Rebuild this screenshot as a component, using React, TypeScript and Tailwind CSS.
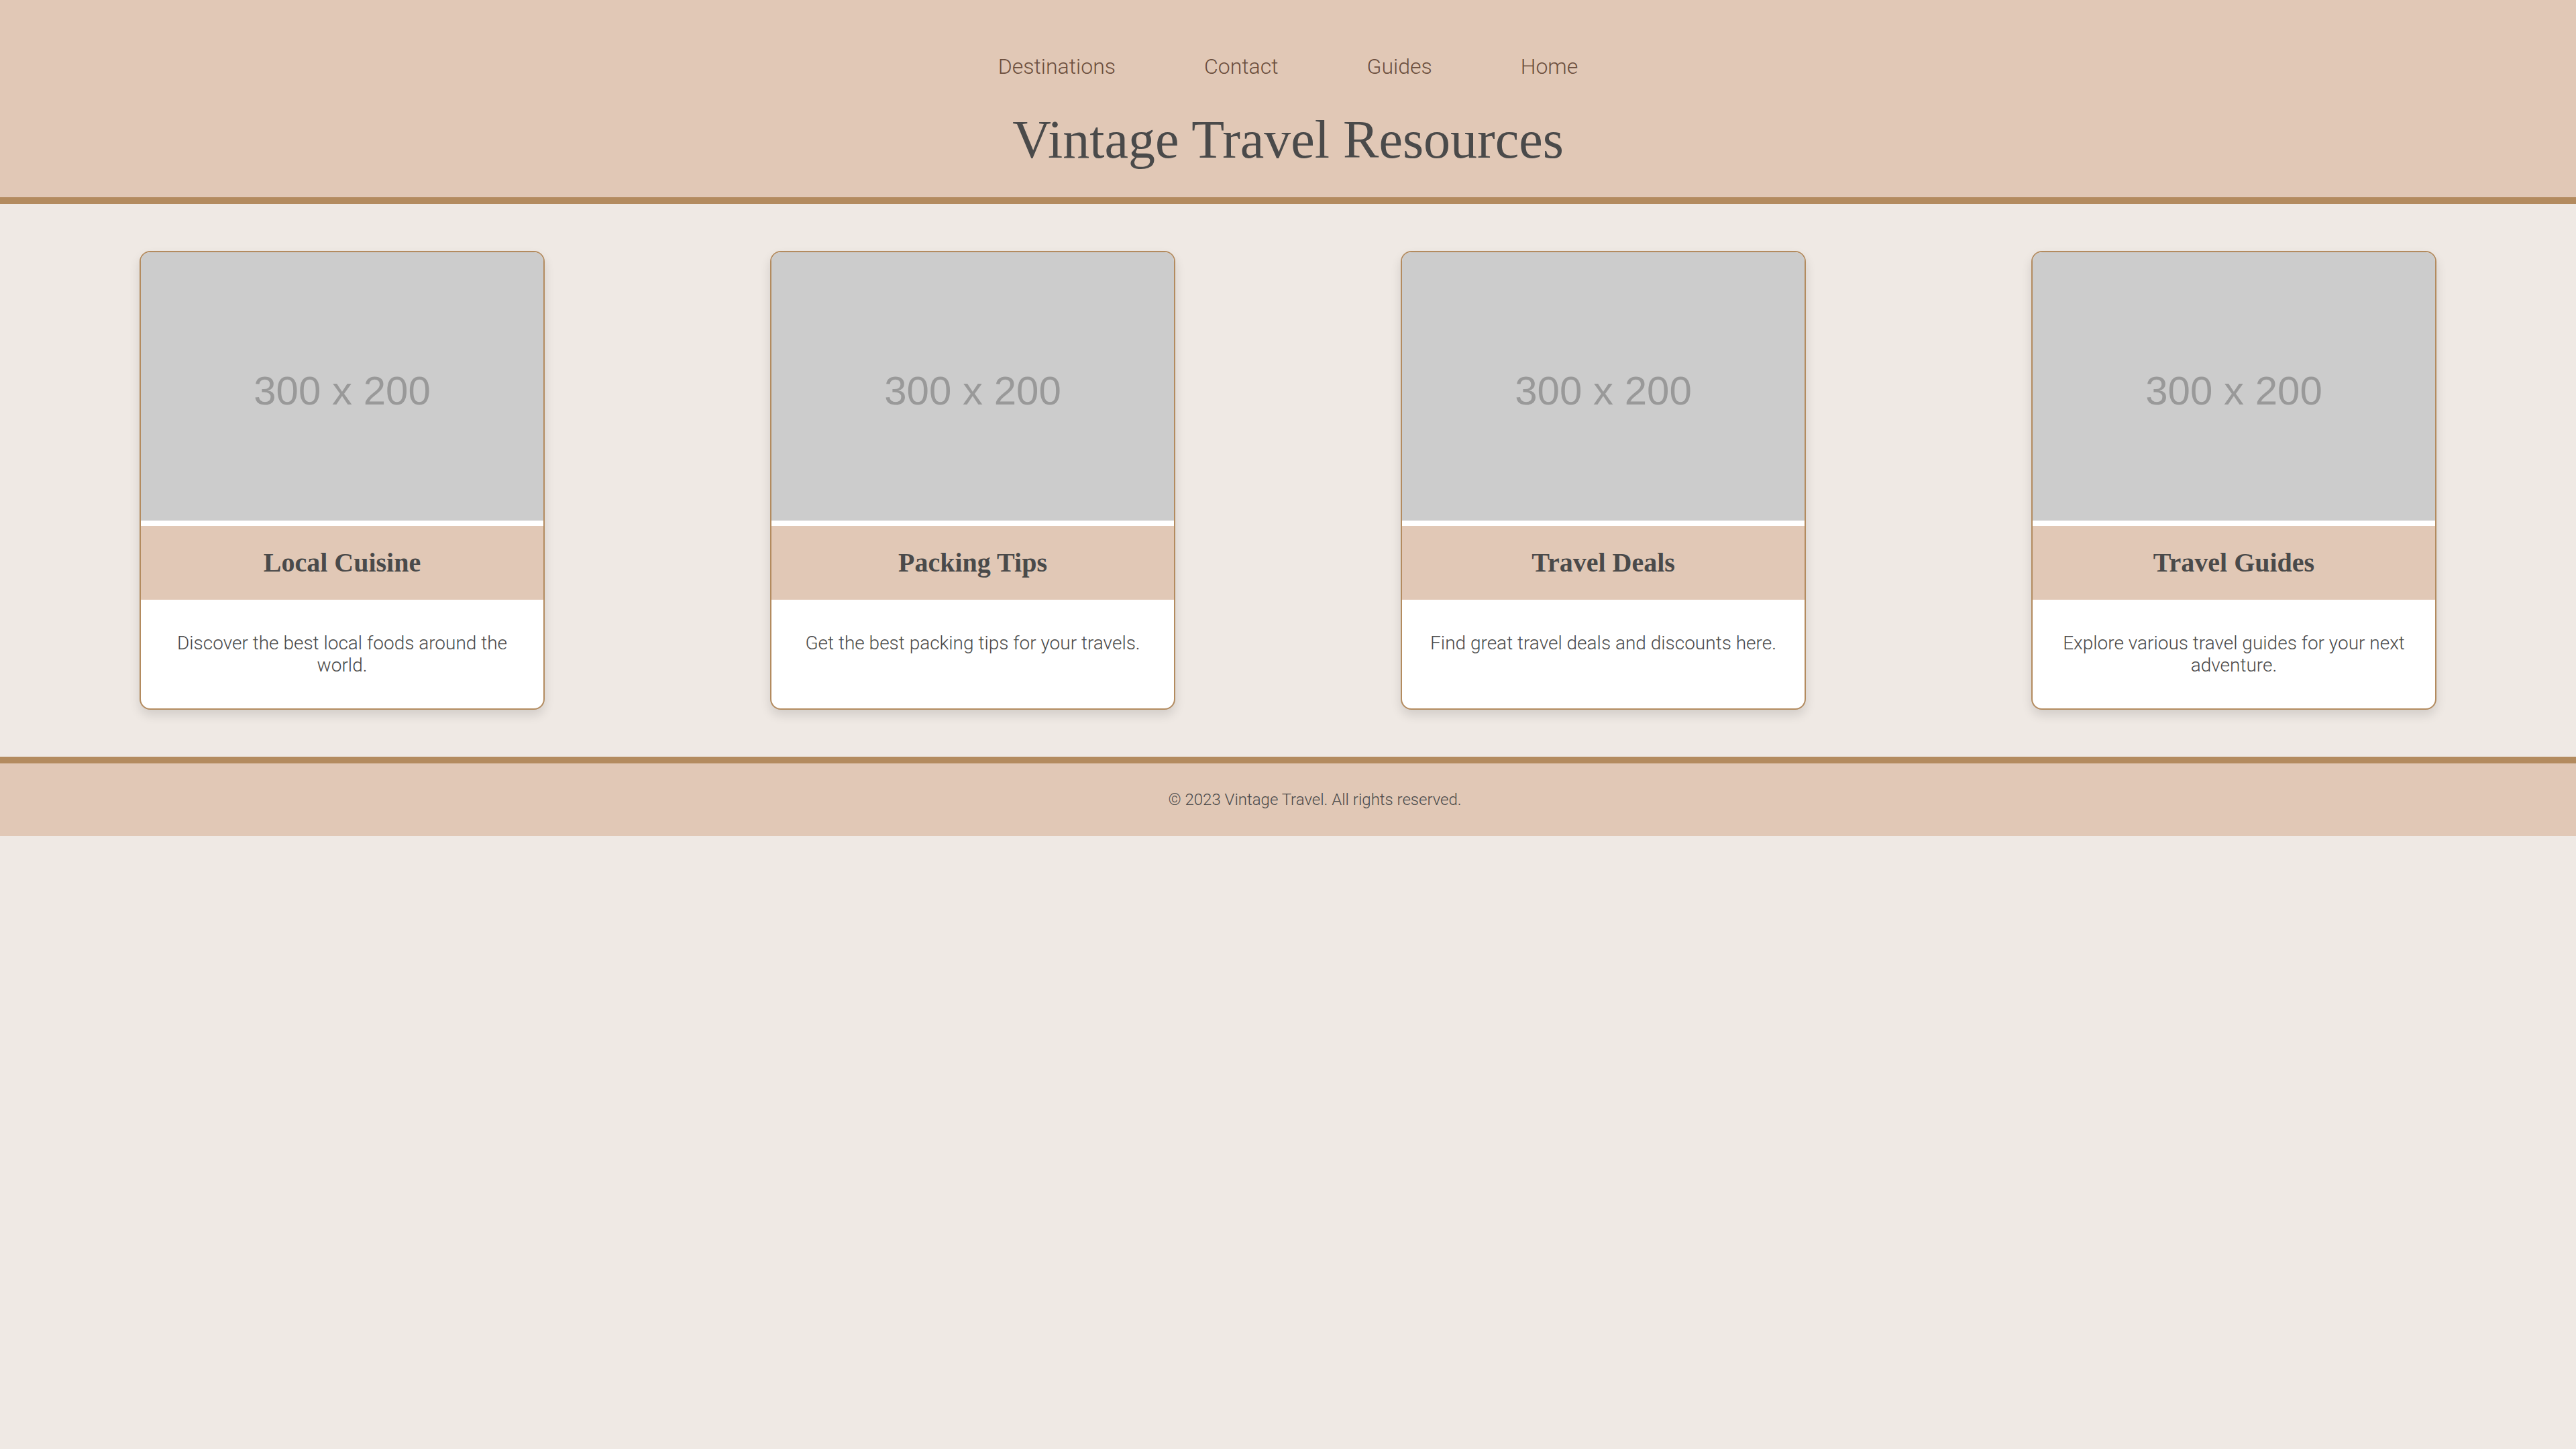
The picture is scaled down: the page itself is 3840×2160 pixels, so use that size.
const cards = [
  { title: 'Local Cuisine', text: 'Discover the best local foods around the world.' },
  { title: 'Packing Tips', text: 'Get the best packing tips for your travels.' },
  { title: 'Travel Deals', text: 'Find great travel deals and discounts here.' },
  { title: 'Travel Guides', text: 'Explore various travel guides for your next adventure.' },
]

const links = ['Destinations', 'Contact', 'Guides', 'Home']

export default function App() {
  return (
    <div className="min-h-screen bg-[#efe9e4] font-['Roboto',sans-serif] font-light text-[#4a4a4a]">
      <header className="bg-[#e1c8b6] border-b-[10px] border-[#b38b5f] pt-20 pb-[40px] text-center">
        <nav className="flex justify-center gap-[132px] text-[32px] leading-[38px] text-[#6b4e3d]">
          {links.map(link => (
            <a key={link} href="#">
              {link}
            </a>
          ))}
        </nav>
        <h1 className="mt-[44px] font-['Liberation_Serif',serif] text-[80px] leading-[92px] text-[#4a4a4a]">
          Vintage Travel Resources
        </h1>
      </header>

      {/* Resource cards */}
      <main className="flex justify-around px-10 py-[70px]">
        {cards.map(card => (
          <div
            key={card.title}
            className="w-[604px] flex flex-col bg-white border-2 border-[#b38b5f] rounded-2xl overflow-hidden shadow-[0_8px_16px_rgba(0,0,0,0.12)]"
          >
            <div className="h-[400px] pt-[14px] bg-[#cccccc] flex items-center justify-center font-['Liberation_Sans',sans-serif] font-normal text-[60px] text-[#999999]">
              300 x 200
            </div>
            <div className="h-2 bg-white" />
            <h3 className="bg-[#e1c8b6] py-[30px] text-center font-['Liberation_Serif',serif] font-bold text-[40px] leading-[50px] text-[#4a4a4a]">
              {card.title}
            </h3>
            <p className="flex-1 px-10 py-12 text-center text-[28px] leading-[33px] text-[#4a4a4a]">
              {card.text}
            </p>
          </div>
        ))}
      </main>

      <footer className="bg-[#e1c8b6] border-t-[10px] border-[#b38b5f] py-10 pl-[80px] text-center text-[24px] leading-[28px] text-[#4a4a4a]">
        © 2023 Vintage Travel. All rights reserved.
      </footer>
    </div>
  )
}
